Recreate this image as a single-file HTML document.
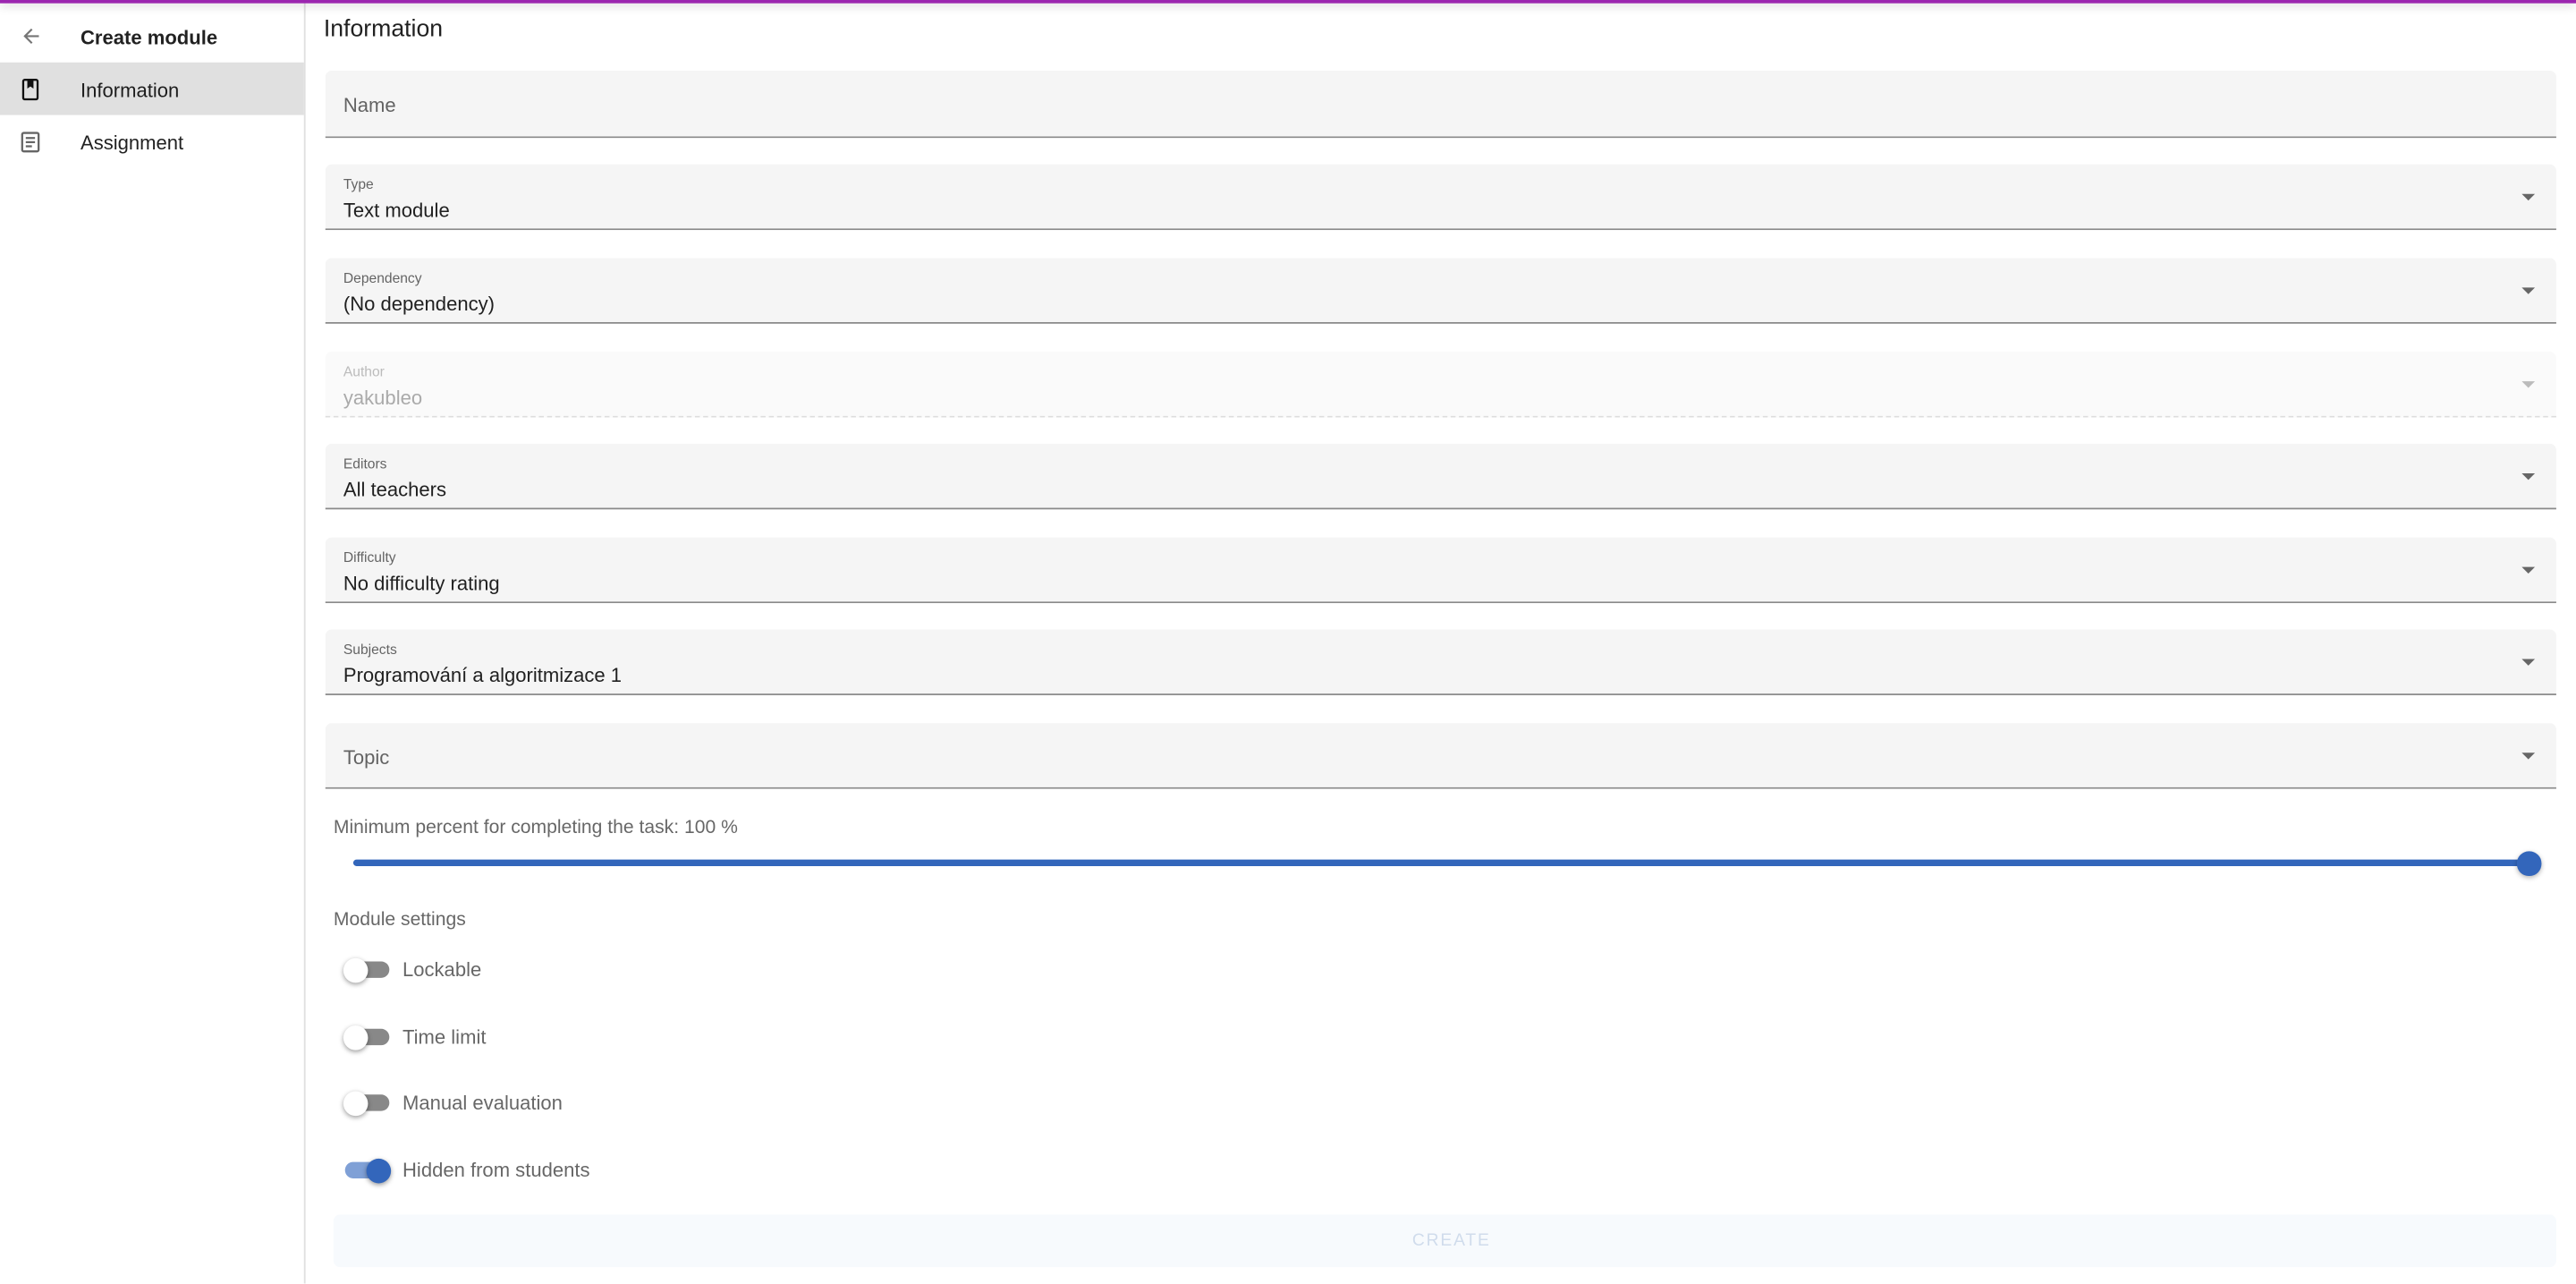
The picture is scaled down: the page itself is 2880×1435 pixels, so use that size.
<!DOCTYPE html>
<html><head><meta charset="utf-8">
<style>
html,body{margin:0;padding:0;background:#fff;overflow:hidden;width:2880px;height:1433px}
#s{position:absolute;left:0;top:0;width:1568px;height:781px;transform:scale(1.836735);transform-origin:0 0;font-family:"Liberation Sans",Roboto,sans-serif;color:rgba(0,0,0,.87)}
.a{position:absolute}
.bar{left:0;top:0;width:1568px;height:1.5px;background:#9c27b0;box-shadow:0 1px 6px rgba(0,0,0,.25)}
.side{left:0;top:0;width:185px;height:781px;border-right:1px solid #e0e0e0}
.f{position:absolute;left:198px;width:1358px;height:40px;background:#f5f5f5;border-bottom:1px solid #8a8a8a;border-radius:4px 4px 0 0;box-sizing:border-box}
.f .l{position:absolute;left:11px;top:7px;font-size:8.5px;color:rgba(0,0,0,.6)}
.f .v{position:absolute;left:11px;top:21px;font-size:12px}
.f .p{position:absolute;left:11px;top:14px;font-size:12px;color:rgba(0,0,0,.6)}
.f .c{position:absolute;right:13px;top:18px;width:0;height:0;border-left:4px solid transparent;border-right:4px solid transparent;border-top:4.5px solid #666}
.t{position:absolute;left:210px;width:27px;height:10px;border-radius:5px;background:#888}
.t i{position:absolute;left:-1px;top:-2.5px;width:15px;height:15px;border-radius:50%;background:#fff;box-shadow:0 1px 3px rgba(0,0,0,.4)}
.tl{position:absolute;left:245px;font-size:12px;color:rgba(0,0,0,.6)}
</style></head><body><div id="s">
<div class="a side"></div>
<div class="a bar"></div>
<svg class="a" style="left:12px;top:15px" width="14" height="14" viewBox="0 0 24 24"><path d="M20 11H7.83l5.59-5.59L12 4l-8 8 8 8 1.41-1.41L7.83 13H20v-2z" fill="#757575"/></svg>
<div class="a" style="left:49px;top:16px;font-size:12px;font-weight:bold">Create module</div>
<div class="a" style="left:0;top:38px;width:185px;height:32px;background:#e0e0e0"></div>
<svg class="a" style="left:11px;top:47px" width="15" height="15" viewBox="0 0 24 24"><rect x="5" y="2.5" width="14" height="19" rx="1.5" fill="none" stroke="#111" stroke-width="2"/><path d="M9 3h6v8l-3-2-3 2z" fill="#111"/></svg>
<div class="a" style="left:49px;top:48px;font-size:12px">Information</div>
<svg class="a" style="left:11px;top:79px" width="15" height="15" viewBox="0 0 24 24"><rect x="4" y="3" width="16" height="18" rx="1.5" fill="none" stroke="#666" stroke-width="2"/><path d="M7.5 8h9M7.5 12h9M7.5 16h6" stroke="#666" stroke-width="2"/></svg>
<div class="a" style="left:49px;top:80px;font-size:12px">Assignment</div>
<div class="a" style="left:197px;top:10px;font-size:14.5px;font-weight:500">Information</div>

<div class="f" style="top:43px;height:41px"><div class="p">Name</div></div>
<div class="f" style="top:100px"><div class="l">Type</div><div class="v">Text module</div><div class="c"></div></div>
<div class="f" style="top:157px"><div class="l">Dependency</div><div class="v">(No dependency)</div><div class="c"></div></div>
<div class="f" style="top:214px;background:#fafafa;border-bottom:1px dashed #ddd"><div class="l" style="color:#bbb">Author</div><div class="v" style="color:#aaa">yakubleo</div><div class="c" style="border-top-color:#bbb"></div></div>
<div class="f" style="top:270px"><div class="l">Editors</div><div class="v">All teachers</div><div class="c"></div></div>
<div class="f" style="top:327px"><div class="l">Difficulty</div><div class="v">No difficulty rating</div><div class="c"></div></div>
<div class="f" style="top:383px"><div class="l">Subjects</div><div class="v">Programování a algoritmizace 1</div><div class="c"></div></div>
<div class="f" style="top:440px"><div class="p">Topic</div><div class="c"></div></div>

<div class="a" style="left:203px;top:498px;font-size:11.5px;color:rgba(0,0,0,.6)">Minimum percent for completing the task: 100 %</div>
<div class="a" style="left:215px;top:523px;width:1324px;height:4px;border-radius:2px;background:#3366bb"></div>
<div class="a" style="left:1532px;top:518px;width:14.5px;height:14.5px;border-radius:50%;background:#3366bb;box-shadow:0 1px 3px rgba(0,0,0,.3)"></div>
<div class="a" style="left:203px;top:554px;font-size:11.5px;color:rgba(0,0,0,.6)">Module settings</div>

<div class="t" style="top:585px"><i></i></div><div class="tl" style="top:583px">Lockable</div>
<div class="t" style="top:626px"><i></i></div><div class="tl" style="top:624px">Time limit</div>
<div class="t" style="top:666px"><i></i></div><div class="tl" style="top:664px">Manual evaluation</div>
<div class="t" style="top:707px;background:#7fa0d6"><i style="left:13px;background:#3366bb"></i></div><div class="tl" style="top:705px">Hidden from students</div>

<div class="a" style="left:203px;top:739px;width:1353px;height:32px;background:#f7fafd;border-radius:4px"></div>
<div class="a" style="left:207px;top:749px;width:1353px;text-align:center;font-size:10.5px;letter-spacing:1px;color:#d0dcec;font-weight:500">CREATE</div>
</div></body></html>
